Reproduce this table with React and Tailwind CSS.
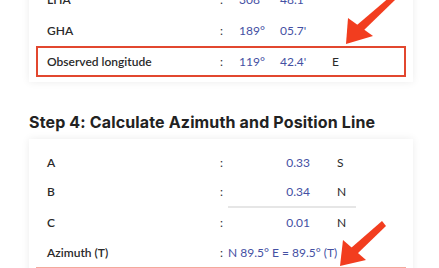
import React from "react";

const font = { fontFamily: "Lato, 'Noto Sans', sans-serif" };
const headFont = { fontFamily: "Inter, 'Noto Sans', sans-serif" };

function Row({ label, deg, min, dir, boxed }) {
  return (
    <div
      className={`flex items-center h-[31px] pl-[9px] border-2 ${
        boxed ? "border-[#e2472f]" : "border-transparent"
      }`}
    >
      <div className="w-[173px] text-[#2a2a2a] font-semibold">{label}</div>
      <div className="w-[19px] text-[#333333]">:</div>
      <div className="w-[41px] text-[#4450a3]">{deg}</div>
      <div className="w-[52px] text-[#4450a3]">{min}</div>
      <div className="text-[#2a2a2a]">{dir}</div>
    </div>
  );
}

function ValRow({ label, val, dir, h }) {
  return (
    <div className={`flex items-center pl-[9px] border-x-2 border-transparent ${h}`}>
      <div className="w-[173px] text-[#2a2a2a] font-semibold">{label}</div>
      <div className="w-[8px] text-[#333333]">:</div>
      <div className="w-[82px] text-right text-[#4450a3]">{val}</div>
      <div className="w-[27px]" />
      <div className="text-[#2a2a2a]">{dir}</div>
    </div>
  );
}

export default function App() {
  return (
    <div
      className="relative w-[439px] h-[268px] overflow-hidden bg-white text-[12px]"
      style={font}
    >
      <div className="pl-[29px]">
        <div className="mt-[-23px] w-[384px] bg-white pt-[7px] pb-[5px] px-[7px] shadow-[0_0_8px_rgba(0,0,0,0.08)]">
          <Row label="LHA" deg="308°" min="48.1'" dir="" />
          <Row label="GHA" deg="189°" min="05.7'" dir="" />
          <Row label="Observed longitude" deg="119°" min="42.4'" dir="E" boxed />
        </div>

        <div
          className="mt-[30px] mb-[7px] h-[20px] leading-[20px] text-[16px] tracking-[0.15px] font-bold text-[#222222]"
          style={headFont}
        >
          Step 4: Calculate Azimuth and Position Line
        </div>

        <div className="w-[384px] bg-white pt-[8px] px-[7px] pb-[10px] shadow-[0_0_8px_rgba(0,0,0,0.08)]">
          <ValRow label="A" val="0.33" dir="S" h="h-[31px]" />
          <ValRow label="B" val="0.34" dir="N" h="h-[28px]" />
          <div className="ml-[192px] w-[128px] h-[2px] bg-[#e6e6e6]" />
          <ValRow label="C" val="0.01" dir="N" h="h-[30px]" />
          <div className="flex items-center h-[29px] pl-[9px] border-x-2 border-transparent">
            <div className="w-[173px] text-[#2a2a2a] font-semibold">Azimuth (T)</div>
            <div className="w-[8px] text-[#333333]">:</div>
            <div className="text-[#4450a3]">N 89.5° E = 89.5° (T)</div>
          </div>
          <div className="h-[31px] border-2 border-[#f4a99c]" />
        </div>
      </div>

      <svg className="absolute left-0 top-0" width="439" height="268" viewBox="0 0 439 268">
        <polygon points="391,-4 395,0 363,31 357,25" fill="#f23d1f" />
        <polygon points="346,44 348,18 373,36" fill="#f23d1f" />
        <polygon points="382,221 386,226 357,254 351,248" fill="#f23d1f" />
        <polygon points="340,266 343,240 366,260" fill="#f23d1f" />
      </svg>
    </div>
  );
}
